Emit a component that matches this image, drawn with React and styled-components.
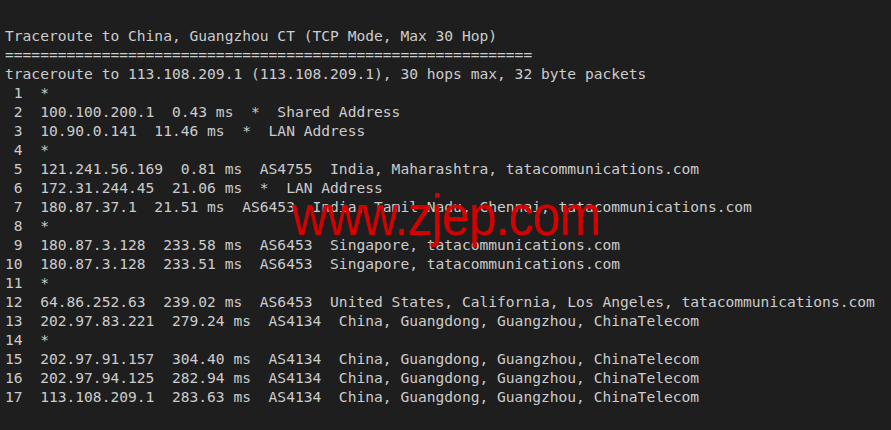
import React from 'react';
import styled, { createGlobalStyle } from 'styled-components';

const GlobalStyle = createGlobalStyle`
  html, body {
    margin: 0;
    padding: 0;
    background: #1e1e1e;
  }
`;

const StyledTerminal = styled.div`
  position: relative;
  width: 891px;
  height: 430px;
  box-sizing: border-box;
  padding: 26px 0 0 5px;
  background: #1e1e1e;
  overflow: hidden;
`;

const StyledOutput = styled.pre`
  margin: 0;
  font-family: 'DejaVu Sans Mono', 'Liberation Mono', monospace;
  font-size: 14.6px;
  line-height: 19px;
  color: #cccccc;
  white-space: pre;
`;

const StyledWatermark = styled.div`
  position: absolute;
  left: 292px;
  top: 185px;
  font-family: 'Liberation Sans', Arial, sans-serif;
  font-size: 58px;
  line-height: 60px;
  color: #dd0000;
  transform: scaleX(0.86);
  transform-origin: left top;
  letter-spacing: -1px;
  opacity: 0.95;
`;

const lines = [
  'Traceroute to China, Guangzhou CT (TCP Mode, Max 30 Hop)',
  '='.repeat(60),
  'traceroute to 113.108.209.1 (113.108.209.1), 30 hops max, 32 byte packets',
  ' 1  *',
  ' 2  100.100.200.1  0.43 ms  *  Shared Address',
  ' 3  10.90.0.141  11.46 ms  *  LAN Address',
  ' 4  *',
  ' 5  121.241.56.169  0.81 ms  AS4755  India, Maharashtra, tatacommunications.com',
  ' 6  172.31.244.45  21.06 ms  *  LAN Address',
  ' 7  180.87.37.1  21.51 ms  AS6453  India, Tamil Nadu, Chennai, tatacommunications.com',
  ' 8  *',
  ' 9  180.87.3.128  233.58 ms  AS6453  Singapore, tatacommunications.com',
  '10  180.87.3.128  233.51 ms  AS6453  Singapore, tatacommunications.com',
  '11  *',
  '12  64.86.252.63  239.02 ms  AS6453  United States, California, Los Angeles, tatacommunications.com',
  '13  202.97.83.221  279.24 ms  AS4134  China, Guangdong, Guangzhou, ChinaTelecom',
  '14  *',
  '15  202.97.91.157  304.40 ms  AS4134  China, Guangdong, Guangzhou, ChinaTelecom',
  '16  202.97.94.125  282.94 ms  AS4134  China, Guangdong, Guangzhou, ChinaTelecom',
  '17  113.108.209.1  283.63 ms  AS4134  China, Guangdong, Guangzhou, ChinaTelecom',
];

const App = () => {
  return (
    <>
      <GlobalStyle />
      <StyledTerminal>
        <StyledOutput>{lines.join('\n')}</StyledOutput>
        <StyledWatermark>www.zjep.com</StyledWatermark>
      </StyledTerminal>
    </>
  );
};

export default App;
